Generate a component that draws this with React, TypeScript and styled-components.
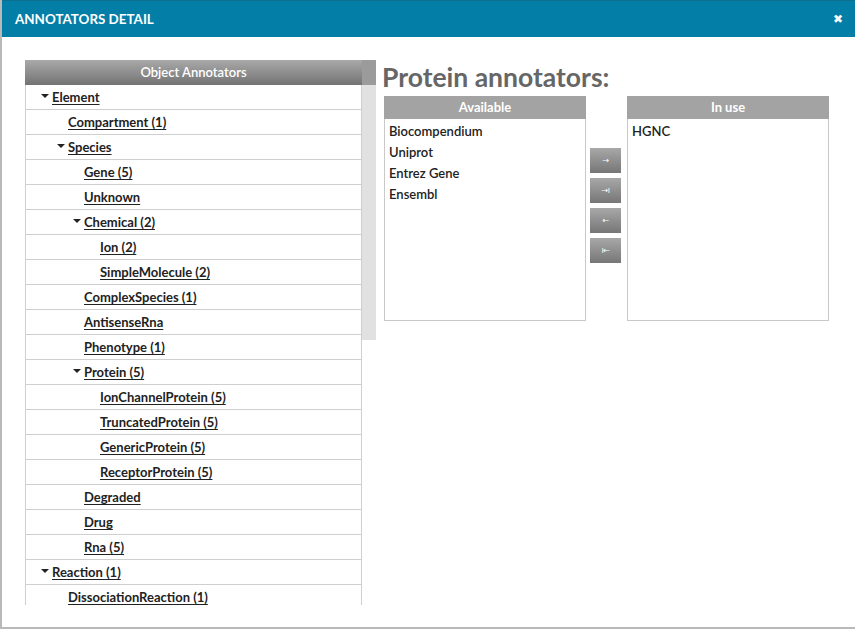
import React from 'react';
import styled, { createGlobalStyle } from 'styled-components';

type TreeNode = {
  label: string;
  level: number;
  expanded?: boolean;
};

const treeItems: TreeNode[] = [
  { label: 'Element', level: 0, expanded: true },
  { label: 'Compartment (1)', level: 1 },
  { label: 'Species', level: 1, expanded: true },
  { label: 'Gene (5)', level: 2 },
  { label: 'Unknown', level: 2 },
  { label: 'Chemical (2)', level: 2, expanded: true },
  { label: 'Ion (2)', level: 3 },
  { label: 'SimpleMolecule (2)', level: 3 },
  { label: 'ComplexSpecies (1)', level: 2 },
  { label: 'AntisenseRna', level: 2 },
  { label: 'Phenotype (1)', level: 2 },
  { label: 'Protein (5)', level: 2, expanded: true },
  { label: 'IonChannelProtein (5)', level: 3 },
  { label: 'TruncatedProtein (5)', level: 3 },
  { label: 'GenericProtein (5)', level: 3 },
  { label: 'ReceptorProtein (5)', level: 3 },
  { label: 'Degraded', level: 2 },
  { label: 'Drug', level: 2 },
  { label: 'Rna (5)', level: 2 },
  { label: 'Reaction (1)', level: 0, expanded: true },
  { label: 'DissociationReaction (1)', level: 1 },
];

const available = ['Biocompendium', 'Uniprot', 'Entrez Gene', 'Ensembl'];
const inUse = ['HGNC'];
const moveButtons = ['→', '→ı', '←', 'ı←'];

const App: React.FC = () => (
  <>
    <GlobalStyle />
    <Page>
      <Dialog>
        <TitleBar>
          <Title>Annotators detail</Title>
          <CloseButton>✖</CloseButton>
        </TitleBar>
        <Body>
          <TreePanel>
            <TreeColumn>
              <GradientHeader>Object Annotators</GradientHeader>
              <TreeList>
                {treeItems.map(({ label, level, expanded }) => (
                  <TreeRow key={label} $level={level}>
                    {expanded && <Caret />}
                    <TreeLink>{label}</TreeLink>
                  </TreeRow>
                ))}
              </TreeList>
            </TreeColumn>
            <ScrollColumn>
              <ScrollCorner />
              <ScrollThumb />
            </ScrollColumn>
          </TreePanel>
          <EditorPanel>
            <Heading>Protein annotators:</Heading>
            <DualList>
              <ListBox>
                <BoxHeader>Available</BoxHeader>
                <BoxItems>
                  {available.map((name) => (
                    <BoxItem key={name}>{name}</BoxItem>
                  ))}
                </BoxItems>
              </ListBox>
              <ButtonStack>
                {moveButtons.map((glyph) => (
                  <MoveButton key={glyph}>{glyph}</MoveButton>
                ))}
              </ButtonStack>
              <ListBox>
                <BoxHeader>In use</BoxHeader>
                <BoxItems>
                  {inUse.map((name) => (
                    <BoxItem key={name}>{name}</BoxItem>
                  ))}
                </BoxItems>
              </ListBox>
            </DualList>
          </EditorPanel>
        </Body>
      </Dialog>
    </Page>
  </>
);

export default App;

const GlobalStyle = createGlobalStyle`
  html, body {
    margin: 0;
    padding: 0;
    background: #b9b9b9;
    font-family: Lato, "Open Sans", "Liberation Sans", sans-serif;
  }
`;

const Page = styled.div`
  width: 855px;
  height: 629px;
  overflow: hidden;
  padding-left: 2px;
  box-sizing: border-box;
`;

const Dialog = styled.div`
  width: 853px;
  height: 627px;
  background: #fff;
  display: flex;
  flex-direction: column;
`;

const TitleBar = styled.div`
  height: 37px;
  flex-shrink: 0;
  background: #037ea7;
  border-top: 1px solid #0f6f8f;
  box-sizing: border-box;
  display: flex;
  align-items: center;
  justify-content: space-between;
  padding: 0 12px 0 13px;
`;

const Title = styled.div`
  color: #fff;
  font-weight: 700;
  font-size: 13.4px;
  text-transform: uppercase;
`;

const CloseButton = styled.div`
  color: #fff;
  font-family: "DejaVu Sans", sans-serif;
  font-weight: 700;
  font-size: 12px;
`;

const Body = styled.div`
  display: flex;
  align-items: flex-start;
  padding: 23px 0 0 23px;
`;

const TreePanel = styled.div`
  display: flex;
  align-items: flex-start;
`;

const TreeColumn = styled.div`
  width: 337px;
`;

const GradientHeader = styled.div`
  height: 25px;
  line-height: 25px;
  text-align: center;
  color: #fff;
  font-size: 13px;
  font-weight: 600;
  background: linear-gradient(#a9a9a9, #737373);
`;

const TreeList = styled.div`
  height: 520px;
  overflow: hidden;
  border-left: 1px solid #cfcfcf;
  border-right: 1px solid #cfcfcf;
`;

const TreeRow = styled.div<{ $level: number }>`
  height: 24px;
  border-bottom: 1px solid #cfcfcf;
  display: flex;
  align-items: center;
  position: relative;
  padding-left: ${({ $level }) => 26 + $level * 16}px;
`;

const Caret = styled.span`
  position: absolute;
  margin-left: -11px;
  margin-top: -3px;
  width: 0;
  height: 0;
  border-left: 4px solid transparent;
  border-right: 4px solid transparent;
  border-top: 4px solid #222;
`;

const TreeLink = styled.a`
  color: #222;
  font-size: 13px;
  font-weight: 700;
  text-decoration: underline;
  text-underline-offset: 1.5px;
  cursor: pointer;
`;

const ScrollColumn = styled.div`
  width: 14px;
  display: flex;
  flex-direction: column;
`;

const ScrollCorner = styled.div`
  height: 25px;
  background: #9b9b9b;
`;

const ScrollThumb = styled.div`
  height: 255px;
  background: #e1e1e1;
`;

const EditorPanel = styled.div`
  display: flex;
  flex-direction: column;
  padding-left: 6px;
`;

const Heading = styled.h2`
  margin: 0;
  height: 36px;
  line-height: 34px;
  font-size: 26.5px;
  font-weight: 700;
  color: #666;
`;

const DualList = styled.div`
  display: flex;
  align-items: flex-start;
  padding-left: 2px;
  gap: 4px;
`;

const ListBox = styled.div`
  width: 202px;
`;

const BoxHeader = styled.div`
  height: 23px;
  line-height: 23px;
  background: #a3a3a3;
  color: #fff;
  text-align: center;
  font-size: 13px;
  font-weight: 700;
`;

const BoxItems = styled.div`
  height: 195px;
  border: 1px solid #c9c9c9;
  border-top: none;
  padding: 2px 4px 4px;
  width: 192px;
`;

const BoxItem = styled.div`
  height: 21px;
  line-height: 20px;
  color: #222;
  font-size: 13px;
  font-weight: 600;
`;

const ButtonStack = styled.div`
  display: flex;
  flex-direction: column;
  gap: 5px;
  padding-top: 52px;
  margin-right: 2px;
`;

const MoveButton = styled.button`
  width: 31px;
  height: 25px;
  border: none;
  padding: 0;
  background: linear-gradient(#a8a8a8, #767676);
  color: #fff;
  font-family: "DejaVu Sans", sans-serif;
  font-size: 8px;
  letter-spacing: -0.5px;
  cursor: pointer;
`;
